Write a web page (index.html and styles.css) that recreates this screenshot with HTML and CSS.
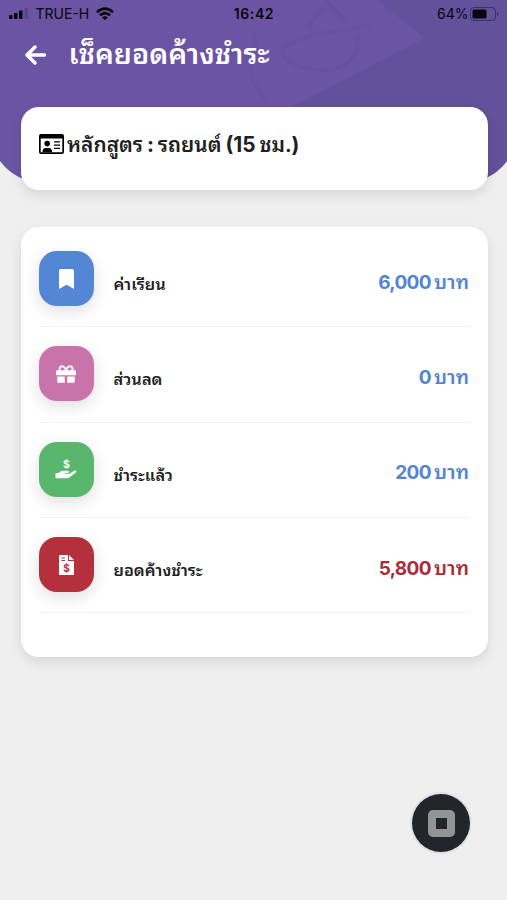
FILE: index.html
```html
<!DOCTYPE html>
<html lang="th">
<head>
<meta charset="utf-8">
<meta name="viewport" content="width=device-width, initial-scale=1">
<title>เช็คยอดค้างชำระ</title>
<link rel="stylesheet" href="styles.css">
</head>
<body>
<div class="screen">
  <div class="backdrop">
    <svg class="pattern" width="507" height="184" viewBox="0 0 507 184">
      <path d="M377 0L425 38L295 105L220 150V184H507V0Z" fill="#4d4b86" opacity=".28"/>
      <g fill="none" stroke="#4e4290" opacity=".13" stroke-width="4">
        <path d="M370 27C335 29 290 38 283 50C280 63 305 71 330 70C352 67 358 50 359 34"/>
        <path d="M308 27L327 2L347 22M253 32C262 62 235 69 267 101"/>
      </g>
    </svg>
  </div>
  <header class="status">
    <div class="carrier">
      <svg width="20" height="12" viewBox="0 0 20 12"><rect x="0" y="7" width="3.5" height="4" rx="1"/><rect x="5" y="5" width="3.5" height="6" rx="1"/><rect x="10" y="2.5" width="3.5" height="8.500" rx="1"/><rect x="15.500" y="0" width="3.500" height="11" rx="1" opacity=".2"/></svg>
      <span class="network">TRUE-H</span>
      <svg width="18" height="14" viewBox="0 0 18 14"><g fill="none" stroke="#08060d" stroke-width="2.500"><path d="M1 5.200Q9-2 17 5.200M4 8.300Q9 4 14 8.300"/></g><path d="M6.200 10.300Q9 8.300 11.800 10.300L9 13.300Z"/></svg>
    </div>
    <span class="clock">16:42</span>
    <div class="battery">
      <span>64%</span>
      <svg width="29" height="14" viewBox="0 0 29 14"><rect x=".5" y=".5" width="25" height="13" rx="3.500" fill="none" stroke="#08060d" opacity=".4"/><rect x="2.500" y="2.500" width="14" height="9" rx="1.500"/><path d="M27 5Q30 7 27 9Z" opacity=".4"/></svg>
    </div>
  </header>
  <nav class="titlebar">
    <svg width="22" height="20" viewBox="0 0 22 20"><path d="M19.500 10H2.500M10 2L2 10L10 18" fill="none" stroke="#fff" stroke-width="3.400" stroke-linecap="round" stroke-linejoin="round"/></svg>
    <h1>เช็คยอดค้างชำระ</h1>
  </nav>
  <section class="card course">
    <svg width="25" height="20" viewBox="0 0 25 20"><path fill-rule="evenodd" d="M2 0H23Q25 0 25 2V18Q25 20 23 20H2Q0 20 0 18V2Q0 0 2 0ZM1.700 4.500V18.300H23.300V4.500Z"/><circle cx="8.200" cy="9.600" r="2.800"/><path d="M3.500 18.300V17Q4 14 6.500 14H10Q12.500 14 13 17V18.300ZM15 7.200H21V8.400H15ZM15 10.500H21V11.700H15ZM15 13.800H21V15H15Z"/></svg>
    <h2><span>หลักสูตร</span> <b>:</b> <span>รถยนต์</span> <b>(15</b> <span>ชม.</span><b>)</b></h2>
  </section>
  <main class="card summary">
    <div class="row">
      <i class="tile blue"><svg width="15" height="20" viewBox="0 0 384 512"><path d="M0 512V48C0 21 21 0 48 0h288c27 0 48 21 48 48v464L192 400Z"/></svg></i>
      <span class="label">ค่าเรียน</span><strong class="amount"><b>6,000</b> <span>บาท</span></strong>
    </div>
    <div class="row">
      <i class="tile pink"><svg width="20" height="20" viewBox="0 0 512 512"><path d="M32 448c0 17.700 14.300 32 32 32h160V320H32v128zm256 32h160c17.700 0 32-14.300 32-32V320H288v160zm192-320h-42.100c6.200-12.100 10.100-25.500 10.100-40 0-48.500-39.500-88-88-88-41.600 0-68.500 21.300-103 68.300-34.500-47-61.400-68.300-103-68.300-48.500 0-88 39.500-88 88 0 14.500 3.800 27.900 10.100 40H32c-17.700 0-32 14.300-32 32v80c0 8.800 7.200 16 16 16h480c8.800 0 16-7.200 16-16v-80c0-17.700-14.300-32-32-32zm-326.100 0c-22.100 0-40-17.900-40-40s17.900-40 40-40c19.900 0 34.600 3.300 86.100 80h-86.100zm206.100 0h-86.100c51.400-76.500 65.700-80 86.100-80 22.100 0 40 17.900 40 40s-17.900 40-40 40z"/></svg></i>
      <span class="label">ส่วนลด</span><strong class="amount"><b>0</b> <span>บาท</span></strong>
    </div>
    <div class="row">
      <i class="tile green"><svg width="22" height="22" viewBox="0 0 22 22"><text x="11.500" y="9.500" text-anchor="middle" class="dollar">$</text><path d="M1 15H3.500L5.500 13.400Q6.500 12.700 8 12.700H13Q14.500 12.900 14 14.200Q13.500 15 12 15H10V15.700H14.500L19 12.700Q20.500 12 21.300 13Q21.700 13.900 20.500 14.800L15.500 18.500Q14 20.300 12.500 20.300H1Q.5 20.300 .5 19.500V15.500Q.5 15 1 15Z"/></svg></i>
      <span class="label">ชำระแล้ว</span><strong class="amount"><b>200</b> <span>บาท</span></strong>
    </div>
    <div class="row">
      <i class="tile red"><svg width="15" height="20" viewBox="0 0 15 20"><path d="M1 0H9V5.500Q9 6 9.500 6H15V19Q15 20 14 20H1Q0 20 0 19V1Q0 0 1 0ZM10 0L15 5H10Z"/><path d="M2.500 3H6M2.500 5.500H6" stroke="#b4303d" stroke-width="1"/><text x="7.600" y="16.800" text-anchor="middle" class="dollar bill">$</text></svg></i>
      <span class="label">ยอดค้างชำระ</span><strong class="amount due"><b>5,800</b> <span>บาท</span></strong>
    </div>
  </main>
  <button class="record" aria-label="หยุด"><span></span></button>
</div>
</body>
</html>
```
FILE: styles.css
```css
* { box-sizing: border-box; }
body { margin: 0; background: #efefef; font-family: Inter, "Noto Sans Thai Looped", "Noto Sans Thai", Loma, sans-serif; color: #202020; }
.screen { position: relative; height: 900px; overflow: hidden; padding: 0 19.5px 0 20.5px; }
.backdrop { position: absolute; top: 0; left: -11px; right: -11px; height: 183px; background: #6b54a4; border-radius: 0 0 55px 55px; overflow: hidden; }
.pattern { display: block; margin-left: 11px; }
.status { position: relative; height: 27px; margin: 0 -12px; display: flex; align-items: center; justify-content: space-between; font-size: 14px; color: #08060d; fill: #08060d; }
.carrier, .battery { display: flex; align-items: center; gap: 7px; }
.carrier { width: 190px; }
.battery { width: 190px; justify-content: flex-end; gap: 2px; }
.status .clock { font-weight: 600; letter-spacing: .6px; }
.titlebar { position: relative; height: 80px; display: flex; align-items: flex-start; padding: 17px 0 0 4.500px; }
.titlebar svg { margin-top: 1px; }
.titlebar h1 { margin: 0 0 0 21.500px; color: #fff; font-size: 28.600px; line-height: 20px; font-weight: 600; white-space: nowrap; }
.card { position: relative; background: #fff; border-radius: 18px; box-shadow: 0 5px 12px rgba(0,0,0,.10); }
.course { height: 83px; padding: 27px 18px; display: flex; align-items: flex-start; gap: 3.500px; }
.course h2 { margin: 1px 0 0; font-size: 20.800px; line-height: 20px; font-weight: 600; word-spacing: -1.300px; white-space: nowrap; }
.course b { font-weight: 700; }
.summary { height: 430px; margin-top: 37px; padding: 5px 18px; }
.row { height: 95.300px; padding-bottom: 1px; display: flex; align-items: center; border-bottom: 1px solid #f3f3f3; }
.tile { width: 55px; height: 55px; border-radius: 18px; display: flex; align-items: center; justify-content: center; fill: #fff; box-shadow: 0 5px 16px rgba(0,0,0,.13); }
.blue { background: #5486d6; }
.pink { background: #c873aa; }
.green { background: #59b66d; }
.red { background: #b4303d; }
.tile svg { overflow: visible; }
.dollar { font: 700 10.500px/1 Inter, sans-serif; }
.bill { fill: #b4303d; font-size: 10px; }
.label { margin: 8px 0 0 20px; font-size: 16.400px; font-weight: 600; white-space: nowrap; }
.amount { margin: 2px .5px 0 auto; color: #5484d0; font-size: 19px; font-weight: 600; word-spacing: -1.500px; white-space: nowrap; }
.amount b { font-weight: 700; letter-spacing: -.7px; }
.amount span { font-size: 19.800px; }
.due { color: #aa2c3a; }
.record { position: absolute; left: 412px; top: 794px; width: 58px; height: 58px; padding: 0; border: 0; border-radius: 50%; background: #20262a; box-shadow: 0 0 0 2px #dfe2e2; display: flex; align-items: center; justify-content: center; }
.record span { width: 27px; height: 27px; border: 8px solid #929496; border-radius: 5px; background: #20262a; }
```
